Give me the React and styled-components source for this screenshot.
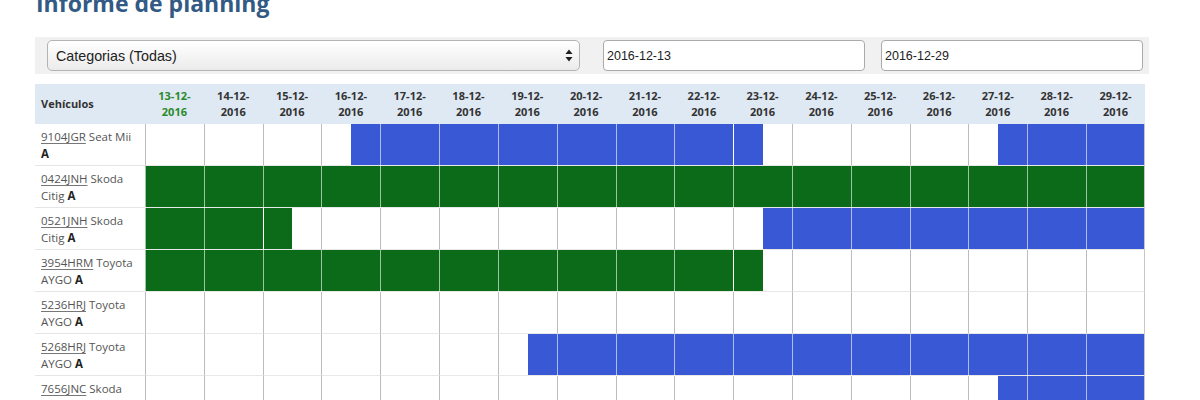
import React from "react";
import styled, { createGlobalStyle } from "styled-components";

const GlobalStyle = createGlobalStyle`
  body {
    margin: 0;
    background: #fff;
    font-family: "Open Sans", "Liberation Sans", sans-serif;
    overflow: hidden;
  }
`;

const COLORS = { b: "#3858d6", g: "#0b6b18" };

const DAYS = Array.from({ length: 17 }, (_, i) => `${13 + i}-12-`);

const ROWS = [
  { plate: "9104JGR", model: "Seat Mii", cat: "A", bars: [[3.5, 10.5, "b"], [14.5, 17, "b"]] },
  { plate: "0424JNH", model: "Skoda Citig", cat: "A", bars: [[0, 17, "g"]] },
  { plate: "0521JNH", model: "Skoda Citig", cat: "A", bars: [[0, 2.5, "g"], [10.5, 17, "b"]] },
  { plate: "3954HRM", model: "Toyota AYGO", cat: "A", bars: [[0, 10.5, "g"]] },
  { plate: "5236HRJ", model: "Toyota AYGO", cat: "A", bars: [] },
  { plate: "5268HRJ", model: "Toyota AYGO", cat: "A", bars: [[6.5, 17, "b"]] },
  { plate: "7656JNC", model: "Skoda Citig", cat: "A", bars: [[14.5, 17, "b"]] },
];

const Page = styled.div`
  padding: 0 51px 0 35px;
`;

const Title = styled.h1`
  margin: -13px 0 0 1px;
  font-size: 23px;
  line-height: 32px;
  font-weight: 700;
  color: #325a85;
`;

const FilterBar = styled.div`
  margin-top: 18px;
  display: flex;
  align-items: center;
  background: #f1f1f1;
  padding: 3px 6px 3px 12px;
  height: 31px;
`;

const Select = styled.div`
  width: 533px;
  height: 31px;
  box-sizing: border-box;
  border: 1px solid #b4b4b4;
  border-radius: 5px;
  background: linear-gradient(#ffffff, #ebebeb);
  display: flex;
  align-items: center;
  justify-content: space-between;
  padding: 0 6px 0 8px;
  font-family: "Liberation Sans", Arial, sans-serif;
  font-size: 14.3px;
  color: #222;
`;

const DateInput = styled.div`
  width: 262px;
  height: 31px;
  box-sizing: border-box;
  margin-left: ${(p) => p.$gap}px;
  border: 1px solid #aaa;
  border-radius: 4px;
  background: #fff;
  display: flex;
  align-items: center;
  padding-left: 3px;
  font-family: "Liberation Sans", Arial, sans-serif;
  font-size: 12.5px;
  color: #222;
`;

const Table = styled.table`
  margin-top: 10px;
  width: 1110px;
  table-layout: fixed;
  border-collapse: separate;
  border-spacing: 0;
  font-size: 11px;
`;

const HeadCell = styled.th`
  background: #dfe9f3;
  height: 40px;
  padding: 0;
  font-weight: 700;
  line-height: 16px;
  color: ${(p) => (p.$today ? "#2b8a2b" : "#333")};
  text-align: ${(p) => (p.$left ? "left" : "center")};
  padding-left: ${(p) => (p.$left ? "6px" : "0")};
  width: ${(p) => (p.$left ? "104px" : "auto")};
  vertical-align: middle;
`;

const LabelCell = styled.td`
  height: 42px;
  box-sizing: border-box;
  padding: 4px 10px 0 6px;
  border-bottom: 1px solid #e6e6e6;
  font-size: 11.5px;
  line-height: 17px;
  color: #555;
  vertical-align: top;
`;

const Plate = styled.span`
  text-decoration: underline;
  text-decoration-color: #777;
  text-underline-offset: 2px;
`;

const Cat = styled.b`
  color: #222;
`;

const DayCell = styled.td`
  padding: 0;
  height: 42px;
  box-sizing: border-box;
  border-left: 1px solid ${(p) => (p.$lineLight ? "rgba(255,255,255,0.6)" : "#bcbcbc")};
  border-right: ${(p) => (p.$last ? "1px solid #c6c6c6" : "none")};
  border-bottom: 1px solid #e8e8e8;
  background: ${(p) => `linear-gradient(to right, ${p.$l} 50%, ${p.$r} 50%)`};
`;

const Arrows = () => (
  <svg width="8" height="13" viewBox="0 0 8 13">
    <path d="M4 0.5 L7.5 5 L0.5 5 Z" fill="#222" />
    <path d="M4 12.5 L7.5 8 L0.5 8 Z" fill="#222" />
  </svg>
);

function fillAt(bars, pos) {
  const bar = bars.find(([from, to]) => pos >= from && pos < to);
  return bar ? COLORS[bar[2]] : null;
}

export default function App() {
  return (
    <Page>
      <GlobalStyle />
      <Title>Informe de planning</Title>
      <FilterBar>
        <Select>
          <span>Categorias (Todas)</span>
          <Arrows />
        </Select>
        <DateInput $gap={23}>2016-12-13</DateInput>
        <DateInput $gap={16}>2016-12-29</DateInput>
      </FilterBar>
      <Table>
        <thead>
          <tr>
            <HeadCell $left>Vehículos</HeadCell>
            {DAYS.map((d, i) => (
              <HeadCell key={d} $today={i === 0}>
                {d}
                <br />
                2016
              </HeadCell>
            ))}
          </tr>
        </thead>
        <tbody>
          {ROWS.map((row) => (
            <tr key={row.plate}>
              <LabelCell>
                <Plate>{row.plate}</Plate> {row.model} <Cat>{row.cat}</Cat>
              </LabelCell>
              {DAYS.map((d, i) => {
                const l = fillAt(row.bars, i);
                const r = fillAt(row.bars, i + 0.5);
                return (
                  <DayCell
                    key={d}
                    $l={l || "#fff"}
                    $r={r || "#fff"}
                    $lineLight={!!l}
                    $last={i === DAYS.length - 1}
                  />
                );
              })}
            </tr>
          ))}
        </tbody>
      </Table>
    </Page>
  );
}
